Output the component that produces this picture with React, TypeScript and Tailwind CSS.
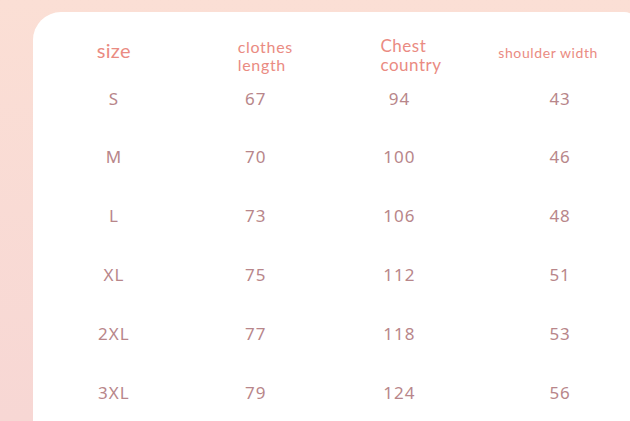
import React from "react";

const rows = [
  ["S", "67", "94", "43"],
  ["M", "70", "100", "46"],
  ["L", "73", "106", "48"],
  ["XL", "75", "112", "51"],
  ["2XL", "77", "118", "53"],
  ["3XL", "79", "124", "56"],
];

export default function App() {
  return (
    <div className="w-[630px] h-[421px] overflow-hidden bg-gradient-to-b from-[#fbdfd5] to-[#f7d7d4]">
      <div className="ml-[33px] mt-[12px] w-[605px] h-[420px] bg-white rounded-tl-[28px] rounded-tr-[14px]">
        <div
          className="flex items-start h-[57px] text-[#ea8b82]"
          style={{ fontFamily: "Lato, 'Open Sans', sans-serif" }}
        >
          <div className="w-[162px] pt-[26px] text-center text-[20px] leading-[24px] tracking-[0.3px]">size</div>
          <div className="w-[122px] pt-[26px] pl-[43px] text-[16px] leading-[18px] tracking-[0.7px] flex flex-col">
            <span>clothes</span>
            <span>length</span>
          </div>
          <div className="w-[166px] pt-[24px] pl-[64px] text-[17px] leading-[19px] tracking-[0.5px] flex flex-col">
            <span>Chest</span>
            <span>country</span>
          </div>
          <div className="w-[156px] pt-[32px] pr-[24px] text-center text-[14px] leading-[17px] tracking-[0.6px] whitespace-nowrap">
            shoulder width
          </div>
        </div>
        {rows.map((r) => (
          <div
            key={r[0]}
            className="flex items-center h-[58.8px] text-[#b8868a] text-[17px] tracking-[1px]"
            style={{ fontFamily: "'Noto Sans', 'Open Sans', sans-serif" }}
          >
            <div className="w-[162px] text-center">{r[0]}</div>
            <div className="w-[122px] text-center">{r[1]}</div>
            <div className="w-[166px] text-center">{r[2]}</div>
            <div className="w-[156px] text-center">{r[3]}</div>
          </div>
        ))}
      </div>
    </div>
  );
}
